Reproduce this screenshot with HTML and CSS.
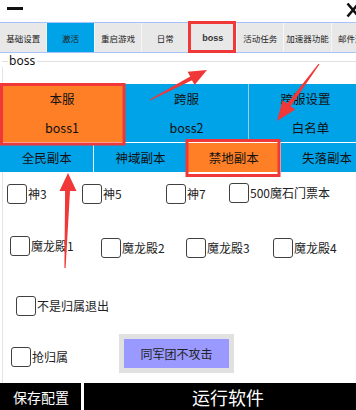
FILE: index.html
```html
<!DOCTYPE html>
<html lang="zh-CN">
<head>
<meta charset="utf-8">
<title>boss</title>
<link rel="stylesheet" href="styles.css">
</head>
<body>
<div class="app">
  <div class="titlebar">
    <div class="min"></div>
    <svg class="close" width="14" height="16" viewBox="0 0 14 16"><path d="M1.5 1.5 L12.5 14.5 M12.5 1.5 L1.5 14.5" stroke="#111" stroke-width="2.6" fill="none"/></svg>
  </div>
  <div class="tabs">
    <div class="tab">基础设置</div>
    <div class="tab active">激活</div>
    <div class="tab">重启游戏</div>
    <div class="tab">日常</div>
    <div class="tab latin">boss</div>
    <div class="tab">活动任务</div>
    <div class="tab">加速器功能</div>
    <div class="tab">邮件通知</div>
  </div>
  <div class="group-head"><span class="legend">boss</span></div>
  <div class="group-body">
    <div class="server-row">
      <div class="srv selected"><span>本服</span><span>boss1</span></div>
      <div class="srv"><span>跨服</span><span>boss2</span></div>
      <div class="srv"><span class="shift">跨服设置</span><span>白名单</span></div>
    </div>
    <div class="dungeon-row">
      <div class="dg">全民副本</div>
      <div class="dg">神域副本</div>
      <div class="dg selected">禁地副本</div>
      <div class="dg">失落副本</div>
    </div>
    <div class="checks">
      <div class="crow a">
        <label class="cb w75"><span class="box"></span>神3</label>
        <label class="cb w84"><span class="box"></span>神5</label>
        <label class="cb w63"><span class="box"></span>神7</label>
        <label class="cb up2"><span class="box"></span>500魔石门票本</label>
      </div>
      <div class="crow b">
        <label class="cb w91"><span class="box"></span>魔龙殿1</label>
        <label class="cb w85 down2"><span class="box"></span>魔龙殿2</label>
        <label class="cb w87 down2"><span class="box"></span>魔龙殿3</label>
        <label class="cb down2"><span class="box"></span>魔龙殿4</label>
      </div>
      <div class="crow c">
        <label class="cb"><span class="box"></span>不是归属退出</label>
      </div>
      <div class="crow d">
        <label class="cb w108 down13"><span class="box"></span>抢归属</label>
        <div class="btn-frame"><div class="btn">同军团不攻击</div></div>
      </div>
    </div>
  </div>
  <div class="bottom">
    <div class="save">保存配置</div>
    <div class="run">运行软件</div>
  </div>
</div>
<svg class="annot" width="356" height="410" viewBox="0 0 356 410">
  <g fill="none" stroke="#f03838" stroke-width="3">
    <rect x="189.5" y="22.5" width="45" height="29"/>
    <rect x="1.5" y="84.5" width="122.5" height="59.5"/>
    <rect x="187" y="140.5" width="92" height="35"/>
  </g>
  <g fill="#f03838">
    <polygon points="149.8,99.6 190.2,76.6 187.6,71.8 207,70 194.6,85 192,80.2 150.2,100.4"/>
    <polygon points="318.5,63.7 287.1,103.6 282.5,100.2 277,121 295.3,109.6 290.7,106.2 319.5,64.3"/>
    <polygon points="64.4,268 65.1,191 59.5,191 68,173 76.5,191 70,191 65.6,268"/>
  </g>
</svg>
</body>
</html>
```
FILE: styles.css
```css
* { box-sizing: border-box; margin: 0; padding: 0; }
html, body { width: 356px; height: 410px; overflow: hidden; background: #fff; }
body {
  position: relative;
  font-family: "Noto Sans CJK SC", "Noto Sans", sans-serif;
  color: #1a1a1a;
}
.app { width: 372px; height: 410px; display: flex; flex-direction: column; }

.titlebar { height: 22px; display: flex; align-items: flex-start; }
.min { width: 16px; height: 3px; background: #111; margin: 7px 0 0 7px; }
.close { margin: 2px 12px 0 auto; }

.tabs {
  height: 31px;
  border-top: 1px solid #a8c2fb;
  border-bottom: 1px solid #a8c2fb;
  background: #e8e8e8;
  display: flex;
}
.tab {
  flex: none;
  width: 47.4px;
  border-right: 1px solid #f6f6f6;
  font-size: 8.5px;
  color: #222;
  display: flex;
  align-items: center;
  justify-content: center;
  white-space: nowrap;
  overflow: hidden;
}
.tab.active { background: #00a2e8; }
.tab.latin { font-family: "Liberation Sans", sans-serif; font-size: 9px; font-weight: bold; color: #333; }

.group-head {
  height: 12px;
  margin: 2px 0 0 2px;
  display: flex;
  align-items: center;
}
.group-head::before { content: ""; width: 6px; border-top: 1px solid #e0e0e0; }
.group-head::after { content: ""; flex: 1; border-top: 1px solid #e0e0e0; }
.legend { font-family: "Noto Sans", sans-serif; font-size: 12px; line-height: 12px; padding: 0 2px 0 1px; color: #111; }

.group-body {
  flex: 1;
  margin-left: 2px;
  border-left: 1px solid #e4e4e4;
  display: flex;
  flex-direction: column;
}

.server-row { margin: 17px 0 0 -3px; height: 58px; display: flex; }
.srv {
  flex: none;
  width: 124px;
  background: #00a2e8;
  display: flex;
  flex-direction: column;
  align-items: center;
  padding-top: 7px;
  gap: 13px;
  font-size: 12.5px;
  line-height: 16px;
  color: #111;
}
.srv + .srv { border-left: 1px solid #9fc9e4; }
.srv.selected { background: #ff7f27; }
.shift { margin-right: 10px; }

.dungeon-row { margin: 1px 0 0 -3px; height: 29px; display: flex; }
.dg {
  flex: none;
  width: 93.3px;
  background: #00a2e8;
  display: flex;
  align-items: center;
  justify-content: center;
  font-size: 12.5px;
  color: #111;
}
.dg + .dg { border-left: 1px solid #e8f6fd; }
.dg.selected { background: #ff7f27; }

.checks { margin-left: -3px; display: flex; flex-direction: column; }
.crow { display: flex; align-items: flex-start; }
.crow.a { margin-top: 12px; padding-left: 7px; }
.crow.b { margin-top: 32px; padding-left: 10px; }
.crow.c { margin-top: 38px; padding-left: 16px; }
.crow.d { margin-top: 18px; padding-left: 11px; }

.cb {
  flex: none;
  display: flex;
  align-items: center;
  font-size: 12px;
  line-height: 20px;
  white-space: nowrap;
  color: #222;
}
.box {
  width: 20px;
  height: 20px;
  border: 1.5px solid #404040;
  border-radius: 3px;
  margin-right: 1px;
  background: #fff;
}
.w63 { width: 63px; }
.w75 { width: 75px; }
.w84 { width: 84px; }
.w85 { width: 85px; }
.w87 { width: 87px; }
.w91 { width: 91px; }
.w108 { width: 108px; }
.up2 { margin-top: -1px; }
.down2 { margin-top: 2px; }
.down13 { margin-top: 13px; }

.btn-frame { flex: none; width: 115px; height: 39px; background: #e1e1e1; padding: 5px; }
.btn {
  width: 100%;
  height: 100%;
  background: #9999ff;
  display: flex;
  align-items: center;
  justify-content: center;
  font-size: 12px;
  color: #222;
}

.bottom { height: 27px; display: flex; }
.save {
  flex: none;
  width: 81px;
  background: #000;
  color: #fff;
  font-size: 14px;
  padding-left: 13px;
  display: flex;
  align-items: center;
}
.run {
  flex: 1;
  margin-left: 3px;
  background: #000;
  color: #fff;
  font-size: 18px;
  display: flex;
  align-items: center;
  justify-content: center;
}

.annot { position: absolute; left: 0; top: 0; pointer-events: none; }
```
